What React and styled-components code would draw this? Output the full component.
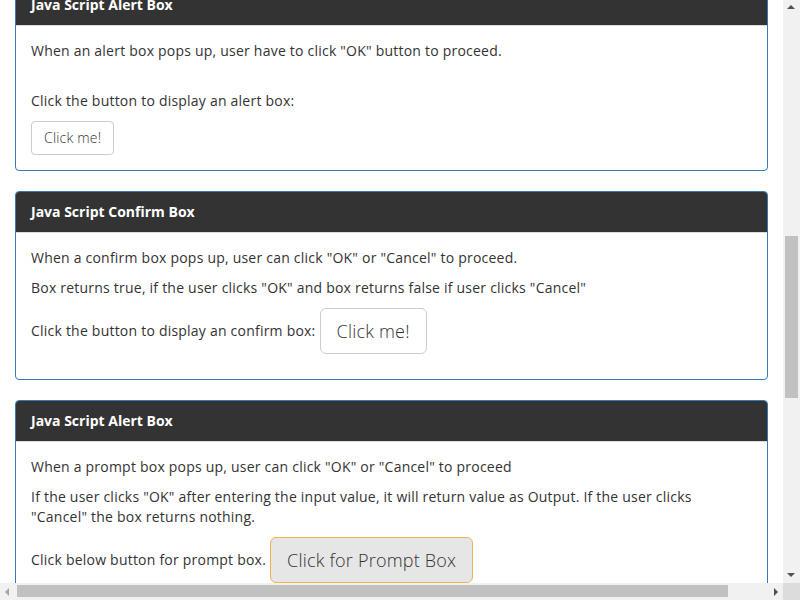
import { useLayoutEffect, useRef } from 'react';
import styled, { createGlobalStyle } from 'styled-components';

const GlobalStyle = createGlobalStyle`
  html, body {
    margin: 0;
    padding: 0;
    background: #fff;
  }
  body {
    font-family: "Open Sans", "Liberation Sans", sans-serif;
    font-size: 14px;
    line-height: 20px;
    color: #333;
  }
`;

const Shell = styled.div`
  display: grid;
  grid-template-columns: 1fr 17px;
  grid-template-rows: 1fr 17px;
  width: 800px;
  height: 600px;
  overflow: hidden;
`;

const Viewport = styled.div`
  overflow: hidden;
`;

const Page = styled.div`
  padding: 0 15px;
  letter-spacing: 0.22px;
`;

const Track = styled.div`
  position: relative;
  background: #f1f1f1;
`;

const Corner = styled.div`
  background: #dcdcdc;
`;

const Thumb = styled.div`
  position: absolute;
  background: #c1c1c1;
  ${(p) =>
    p.$vertical
      ? 'left: 2px; right: 2px; top: 236px; height: 162px;'
      : 'top: 2px; bottom: 3px; left: 17px; width: 711px;'}
`;

const Arrow = styled.span`
  position: absolute;
  width: 0;
  height: 0;
  border: 4px solid transparent;
  ${(p) => {
    const c = p.$disabled ? '#a3a3a3' : '#505050';
    switch (p.$dir) {
      case 'up':
        return `left: 4px; top: 5px; border-bottom: 4px solid ${c}; border-top-width: 0;`;
      case 'down':
        return `left: 4px; bottom: 6px; border-top: 4px solid ${c}; border-bottom-width: 0;`;
      case 'left':
        return `left: 5px; top: 5px; border-right: 4px solid ${c}; border-left-width: 0;`;
      default:
        return `right: 5px; top: 5px; border-left: 4px solid ${c}; border-right-width: 0;`;
    }
  }}
`;

const Panel = styled.section`
  border: 1px solid #337ab7;
  border-radius: 4px;
  margin-bottom: 20px;
  background: #fff;
  overflow: hidden;
`;

const PanelHeading = styled.h3`
  margin: 0;
  padding: 10px 15px;
  background: #333;
  color: #fff;
  font-size: 14px;
  font-weight: 700;
  line-height: 20px;
  letter-spacing: 0;
  border-bottom: 1px solid #ddd;
`;

const PanelBody = styled.div`
  padding: 15px;
`;

const Text = styled.p`
  margin: 0 0 10px;
`;

const ButtonRow = styled.p`
  margin: 0 0 10px;
  display: flex;
  align-items: center;
  gap: 4px;
`;

const Button = styled.button`
  display: inline-block;
  font-family: inherit;
  font-weight: 300;
  letter-spacing: 0.2px;
  color: #333;
  background: ${(p) => (p.$active ? '#e6e6e6' : '#fff')};
  border: 1px solid ${(p) => (p.$active ? '#ecb451' : '#ccc')};
  border-radius: ${(p) => (p.$size === 'lg' ? '6px' : '4px')};
  padding: ${(p) => (p.$size === 'lg' ? '10px 16px' : '6px 12px')};
  font-size: ${(p) => (p.$size === 'lg' ? '18px' : '14px')};
  line-height: ${(p) => (p.$size === 'lg' ? '24px' : '20px')};
  cursor: pointer;
`;

const panels = [
  {
    title: 'Java Script Alert Box',
    lines: [['When an alert box pops up, user have to click "OK" button to proceed.']],
    gap: true,
    prompt: 'Click the button to display an alert box:',
    button: 'Click me!',
    stacked: true,
  },
  {
    title: 'Java Script Confirm Box',
    lines: [
      ['When a confirm box pops up, user can click "OK" or "Cancel" to proceed.'],
      ['Box returns true, if the user clicks "OK" and box returns false if user clicks "Cancel"'],
    ],
    prompt: 'Click the button to display an confirm box:',
    button: 'Click me!',
    size: 'lg',
  },
  {
    title: 'Java Script Alert Box',
    lines: [
      ['When a prompt box pops up, user can click "OK" or "Cancel" to proceed'],
      [
        'If the user clicks "OK" after entering the input value, it will return value as Output. If the user clicks',
        '"Cancel" the box returns nothing.',
      ],
    ],
    prompt: 'Click below button for prompt box.',
    button: 'Click for Prompt Box',
    size: 'lg',
    active: true,
  },
];

function App() {
  const viewRef = useRef(null);

  // the popup section is shown scrolled a little past the first heading
  useLayoutEffect(() => {
    if (viewRef.current) viewRef.current.scrollTop = 16;
  }, []);

  return (
    <>
      <GlobalStyle />
      <Shell>
        <Viewport ref={viewRef}>
          <Page>
            {panels.map((panel, i) => (
              <Panel key={i}>
                <PanelHeading>{panel.title}</PanelHeading>
                <PanelBody>
                  {panel.lines.map((parts, j) => (
                    <Text key={j}>
                      {parts.map((part, k) => (
                        <span key={k}>
                          {k > 0 && <br />}
                          {part}
                        </span>
                      ))}
                    </Text>
                  ))}
                  {panel.stacked ? (
                    <>
                      {panel.gap && <br />}
                      <Text>{panel.prompt}</Text>
                      <Button $size={panel.size}>{panel.button}</Button>
                    </>
                  ) : (
                    <ButtonRow>
                      {panel.prompt}
                      <Button $size={panel.size} $active={panel.active}>
                        {panel.button}
                      </Button>
                    </ButtonRow>
                  )}
                </PanelBody>
              </Panel>
            ))}
          </Page>
        </Viewport>
        <Track>
          <Arrow $dir="up" />
          <Thumb $vertical />
          <Arrow $dir="down" />
        </Track>
        <Track>
          <Arrow $dir="left" $disabled />
          <Thumb />
          <Arrow $dir="right" />
        </Track>
        <Corner />
      </Shell>
    </>
  );
}

export default App;
